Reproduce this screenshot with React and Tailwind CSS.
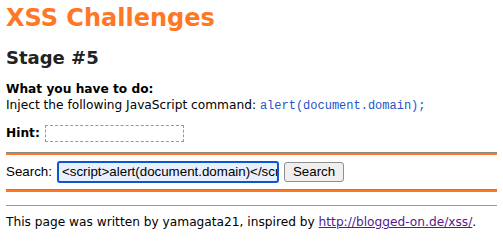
export default function App() {
  return (
    <div className="min-h-[247px] bg-white px-[6px] pt-[3px] text-[12.2px] text-black" style={{ fontFamily: '"DejaVu Sans", Verdana, sans-serif' }}>
      <h1 className="text-[24px] font-bold leading-[30px] text-[#ff7722]">XSS Challenges</h1>
      <h2 className="mt-[14px] text-[18px] font-bold leading-[22px] text-[#222]">Stage #5</h2>

      <div className="mt-[12px] leading-[16px]">
        <div className="font-bold">What you have to do:</div>
        <div>
          Inject the following JavaScript command:{" "}
          <code className="text-[12px] text-[#2255cc]" style={{ fontFamily: '"Liberation Mono", monospace' }}>
            alert(document.domain);
          </code>
        </div>
      </div>

      <div className="mt-[10px] flex items-center gap-[5px]">
        <span className="font-bold">Hint:</span>
        <span className="inline-block h-[17px] w-[139px] border border-dashed border-[#999]"></span>
      </div>

      <div className="mt-[10px] border-t border-[#888]">
        <div className="h-[2px] bg-[#ff7722]"></div>
      </div>

      <div className="flex h-[34px] items-center" style={{ fontFamily: '"Liberation Sans", Arial, sans-serif' }}>
        <span className="mr-[5px] text-[13.33px]">Search:</span>
        <div className="flex h-[22px] w-[222px] items-center overflow-hidden whitespace-nowrap rounded-[3px] border-2 border-[#0b57d0] bg-[#e8f0fe] px-[3px] text-[13.33px]">
          &lt;script&gt;alert(document.domain)&lt;/script&gt;
        </div>
        <button className="ml-[5px] h-[20px] rounded-[3px] border border-[#8f8f8f] bg-[#efefef] px-[8px] text-[13.33px] leading-[18px]">Search</button>
      </div>

      <div className="border-t border-[#888]">
        <div className="h-[2px] bg-[#ff7722]"></div>
      </div>

      <div className="mt-[13px] border-t border-[#999]"></div>
      <p className="mt-[8px] whitespace-nowrap leading-[16px]">
        This page was written by yamagata21, inspired by{" "}
        <a href="#" className="text-[#551a8b] underline">http://blogged-on.de/xss/</a>.
      </p>
    </div>
  );
}
